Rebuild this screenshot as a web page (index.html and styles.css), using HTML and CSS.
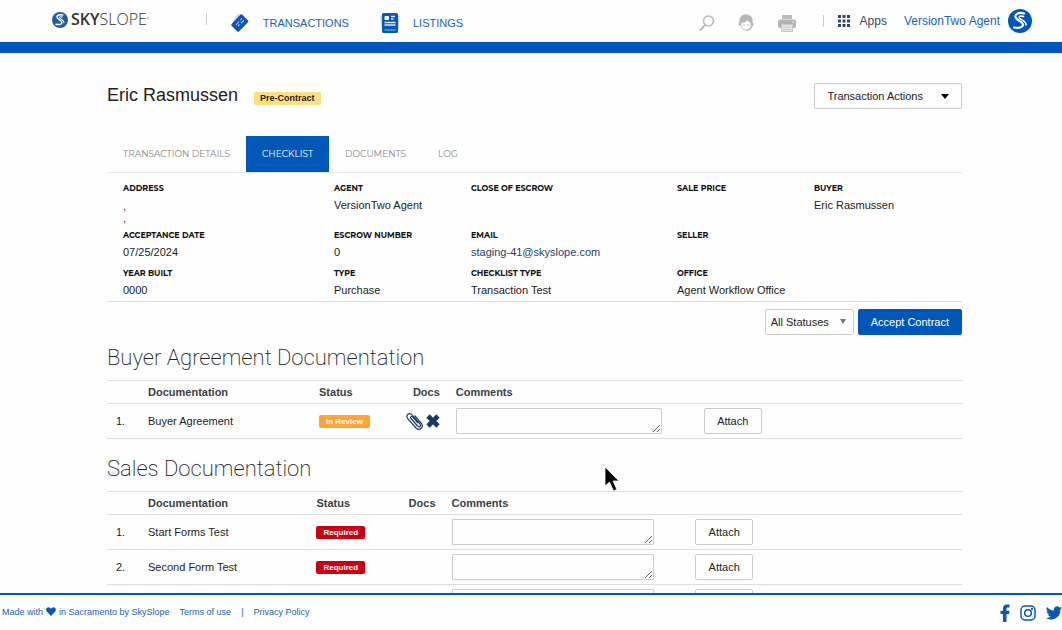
FILE: index.html
```html
<!DOCTYPE html>
<html lang="en">
<head>
    <meta charset="UTF-8">
    <meta name="viewport" content="width=device-width, initial-scale=1.0">
    <title>SkySlope - Checklist</title>
    <link rel="stylesheet" href="styles.css">
</head>
<body>
    <header class="topbar">
        <a href="#" class="logo">
            <svg width="16" height="16" viewBox="0 0 24 24" aria-hidden="true">
                <circle cx="12" cy="12" r="12" fill="#1f5ba8"/>
                <path d="M16 4.500C11 3 7 5 7.500 8C8.500 12 15.500 12.500 15 16C14.500 18.500 11 19.500 6 18.500" fill="none" stroke="#fff" stroke-width="2.200" stroke-linecap="round"/>
                <path d="M15.500 7.500C12.500 6.500 10.500 7.500 11.500 9C13 11 18.500 12 18 16" fill="none" stroke="#fff" stroke-width="1.600" stroke-linecap="round"/>
            </svg>
            <span class="logo-text"><b>SKY</b>SLOPE<small>'</small></span>
        </a>
        <nav class="main-nav">
            <a href="#">
                <svg width="20" height="20" viewBox="0 0 20 20" aria-hidden="true">
                    <path d="M3 8L7 1.500L11 1.500L5 10Z" fill="#d5dbe3"/>
                    <path d="M1.500 11L10.500 1.500Q11.500 1 12.300 1.800L18 7.500Q18.600 8.500 18 9.200L9 18.600Q8 19.200 7.200 18.400L1.500 12.800Q1 12 1.500 11Z" fill="#0a57b5"/>
                    <path d="M6 12L9 8.500M8 13L9.500 11.500M10.500 7L12 5.500M11 10L14 7.500" stroke="#a9c8ec" stroke-width="1.100"/>
                </svg>
                <span>TRANSACTIONS</span>
            </a>
            <a href="#">
                <svg width="20" height="22" viewBox="0 0 20 22" aria-hidden="true">
                    <path d="M0 4L3 3V19L2 18ZM20 4L17 3V19L18.500 18Z" fill="#cdd6e0"/>
                    <rect x="2" y="1" width="16" height="20" rx="1.500" fill="#0a57b5"/>
                    <rect x="4.500" y="4" width="4.500" height="4" rx="1" fill="#fff"/>
                    <path d="M11 4.500H15M11 7H13.500M4.500 10.500H15.500M4.500 13H15.500" stroke="#dbe8f7" stroke-width="1.300"/>
                    <path d="M4.500 18H15.500" stroke="#8fb4e0"/>
                </svg>
                <span>LISTINGS</span>
            </a>
        </nav>
        <div class="tools">
            <button type="button" class="icon-button" aria-label="Search">
                <svg width="16" height="18" viewBox="0 0 16 18">
                    <circle cx="9.500" cy="7" r="5" fill="none" stroke="#b9bbbd" stroke-width="1.600"/>
                    <path d="M6 11L1.500 16" stroke="#b9bbbd" stroke-width="2" stroke-linecap="round"/>
                </svg>
            </button>
            <button type="button" class="icon-button" aria-label="Support">
                <svg width="16" height="18" viewBox="0 0 16 18">
                    <path d="M1.500 9C.5 3 4 .5 8 .5S15.500 3 14.500 9Z" fill="#b5b7b9"/>
                    <circle cx="1.800" cy="10" r="1.500" fill="#b5b7b9"/>
                    <circle cx="14.200" cy="10" r="1.500" fill="#b5b7b9"/>
                    <path d="M3 9Q7 8.500 9.500 6Q11 8 13 9V11Q12.500 16 8 16T3 11Z" fill="#fefefe" stroke="#c3c5c7"/>
                    <circle cx="6" cy="11" r=".8" fill="#aaa"/>
                    <circle cx="10" cy="11" r=".8" fill="#aaa"/>
                    <path d="M8 16.800L12.500 15.500L14.500 11" fill="none" stroke="#b5b7b9"/>
                </svg>
            </button>
            <button type="button" class="icon-button" aria-label="Print">
                <svg width="20" height="18" viewBox="0 0 20 18">
                    <rect x="5" y="1" width="10" height="4" fill="#b9bbbd"/>
                    <rect x="1" y="5.500" width="18" height="8.500" rx="2" fill="#b1b3b5"/>
                    <circle cx="16" cy="8" r=".8" fill="#fff"/>
                    <rect x="4.500" y="10.500" width="11" height="7" fill="#e6e7e8" stroke="#c5c7c9"/>
                    <path d="M6 13H14M6 15.500H14" stroke="#c5c7c9"/>
                </svg>
            </button>
        </div>
        <div class="account">
            <button type="button" class="apps">
                <svg width="14" height="14" viewBox="0 0 14 14" fill="#33475b" aria-hidden="true">
                    <rect x="1" y="1" width="3" height="3"/><rect x="5.500" y="1" width="3" height="3"/><rect x="10" y="1" width="3" height="3"/>
                    <rect x="1" y="5.500" width="3" height="3"/><rect x="5.500" y="5.500" width="3" height="3"/><rect x="10" y="5.500" width="3" height="3"/>
                    <rect x="1" y="10" width="3" height="3"/><rect x="5.500" y="10" width="3" height="3"/><rect x="10" y="10" width="3" height="3"/>
                </svg>
                Apps
            </button>
            <a href="#" class="user">
                VersionTwo Agent
                <svg width="24" height="24" viewBox="0 0 24 24" aria-hidden="true">
                    <circle cx="12" cy="12" r="12" fill="#0057b8"/>
                    <path d="M16 4.500C11 3 7 5 7.500 8C8.500 12 15.500 12.500 15 16C14.500 18.500 11 19.500 6 18.500" fill="none" stroke="#fff" stroke-width="2.200" stroke-linecap="round"/>
                    <path d="M15.500 7.500C12.500 6.500 10.500 7.500 11.500 9C13 11 18.500 12 18 16" fill="none" stroke="#fff" stroke-width="1.600" stroke-linecap="round"/>
                </svg>
            </a>
        </div>
    </header>

    <main class="page">
        <div class="title-row">
            <h1>Eric Rasmussen</h1>
            <span class="label label-pre">Pre-Contract</span>
            <button type="button" class="btn btn-actions">Transaction Actions <span class="caret"></span></button>
        </div>

        <nav class="tabs">
            <a href="#">TRANSACTION DETAILS</a>
            <a href="#" class="active">CHECKLIST</a>
            <a href="#">DOCUMENTS</a>
            <a href="#">LOG</a>
        </nav>

        <dl class="summary">
            <div><dt>ADDRESS</dt><dd class="address">,<br>,</dd></div>
            <div><dt>AGENT</dt><dd>VersionTwo Agent</dd></div>
            <div><dt>CLOSE OF ESCROW</dt><dd></dd></div>
            <div><dt>SALE PRICE</dt><dd></dd></div>
            <div><dt>BUYER</dt><dd>Eric Rasmussen</dd></div>
            <div><dt>ACCEPTANCE DATE</dt><dd>07/25/2024</dd></div>
            <div><dt>ESCROW NUMBER</dt><dd>0</dd></div>
            <div><dt>EMAIL</dt><dd><a href="mailto:staging-41@skyslope.com">staging-41@skyslope.com</a></dd></div>
            <div class="wide"><dt>SELLER</dt><dd></dd></div>
            <div><dt>YEAR BUILT</dt><dd>0000</dd></div>
            <div><dt>TYPE</dt><dd>Purchase</dd></div>
            <div><dt>CHECKLIST TYPE</dt><dd>Transaction Test</dd></div>
            <div class="wide"><dt>OFFICE</dt><dd>Agent Workflow Office</dd></div>
        </dl>

        <div class="toolbar">
            <div class="select-wrap">
                <select aria-label="Status filter">
                    <option>All Statuses</option>
                    <option>Required</option>
                    <option>In Review</option>
                </select>
            </div>
            <button type="button" class="btn btn-primary">Accept Contract</button>
        </div>

        <section>
            <h2>Buyer Agreement Documentation</h2>
            <table class="checklist buyer">
                <colgroup><col class="col-num"><col class="col-doc"><col class="col-status"><col class="col-files"><col class="col-comments"><col></colgroup>
                <thead>
                    <tr><th></th><th>Documentation</th><th>Status</th><th class="files">Docs</th><th>Comments</th><th></th></tr>
                </thead>
                <tbody>
                    <tr>
                        <td class="num">1.</td>
                        <td>Buyer Agreement</td>
                        <td><span class="label label-review">In Review</span></td>
                        <td class="files">
                            <div class="file-icons">
                                <button type="button" class="icon-button" aria-label="View attachment">
                                    <svg width="17" height="19" viewBox="0 0 17 19">
                                        <path d="M5 6.500L11.500 14Q13 15.500 14 14.500T14 12L6 2.800Q4 .8 2 2.300T1.500 6.300L10 16Q12.500 18.500 15 16.500T15.500 11.500L9 4M5 6.500Q4 5.300 5 4.700T7 5.300L11.500 10.500" fill="none" stroke="#173a6a" stroke-width="1.200" stroke-linecap="round"/>
                                    </svg>
                                </button>
                                <button type="button" class="icon-button" aria-label="Remove">
                                    <svg width="14" height="14" viewBox="0 0 14 14">
                                        <path d="M2 2L12 12M12 2L2 12" stroke="#173a6a" stroke-width="4.600"/>
                                    </svg>
                                </button>
                            </div>
                        </td>
                        <td><textarea rows="1" aria-label="Comments for Buyer Agreement"></textarea></td>
                        <td><button type="button" class="btn">Attach</button></td>
                    </tr>
                </tbody>
            </table>
        </section>

        <section>
            <h2>Sales Documentation</h2>
            <table class="checklist sales">
                <colgroup><col class="col-num"><col class="col-doc"><col class="col-status"><col class="col-files"><col class="col-comments"><col></colgroup>
                <thead>
                    <tr><th></th><th>Documentation</th><th>Status</th><th class="files">Docs</th><th>Comments</th><th></th></tr>
                </thead>
                <tbody>
                    <tr>
                        <td class="num">1.</td>
                        <td>Start Forms Test</td>
                        <td><span class="label label-required">Required</span></td>
                        <td></td>
                        <td><textarea rows="1" aria-label="Comments for Start Forms Test"></textarea></td>
                        <td><button type="button" class="btn">Attach</button></td>
                    </tr>
                    <tr>
                        <td class="num">2.</td>
                        <td>Second Form Test</td>
                        <td><span class="label label-required">Required</span></td>
                        <td></td>
                        <td><textarea rows="1" aria-label="Comments for Second Form Test"></textarea></td>
                        <td><button type="button" class="btn">Attach</button></td>
                    </tr>
                    <tr>
                        <td></td>
                        <td></td>
                        <td></td>
                        <td></td>
                        <td><textarea rows="1" aria-label="Comments"></textarea></td>
                        <td><button type="button" class="btn" aria-label="Attach"></button></td>
                    </tr>
                </tbody>
            </table>
        </section>
    </main>

    <footer class="footer">
        <p>
            Made with
            <svg width="10" height="9" viewBox="0 0 10 9" aria-hidden="true"><path d="M5 9L.8 4.600C-.6 2.500.5.300 2.500.200Q4.200.200 5 1.700Q5.800.200 7.500.200C9.500.300 10.600 2.500 9.200 4.600Z" fill="#0a57b5"/></svg>
            in Sacramento by SkySlope
        </p>
        <a href="#">Terms of use</a>
        <span>|</span>
        <a href="#">Privacy Policy</a>
        <div class="social">
            <a href="#" aria-label="Facebook">
                <svg width="10" height="18" viewBox="0 0 10 18"><path d="M3 18V10H.5V6.800H3V4.500C3 1.800 4.500.5 7 .5H9.500V3.500H8C6.800 3.500 6.500 4 6.500 5V6.800H9.500L9 10H6.500V18Z" fill="#0a57b5"/></svg>
            </a>
            <a href="#" aria-label="Instagram">
                <svg width="16" height="16" viewBox="0 0 16 16" fill="none" stroke="#0a57b5" stroke-width="1.500"><rect x="1" y="1" width="14" height="14" rx="4"/><circle cx="8" cy="8" r="3.300"/><circle cx="12" cy="4" r=".4"/></svg>
            </a>
            <a href="#" aria-label="Twitter">
                <svg width="16" height="14" viewBox="0 0 24 20"><path d="M24 2.400a10 10 0 0 1-2.800.8A5 5 0 0 0 23.300.5a10 10 0 0 1-3.100 1.200A4.900 4.900 0 0 0 11.800 6.200 14 14 0 0 1 1.700 1a4.900 4.900 0 0 0 1.500 6.600A5 5 0 0 1 1 7a4.900 4.900 0 0 0 3.900 4.900 5 5 0 0 1-2.200.1 4.900 4.900 0 0 0 4.600 3.400A10 10 0 0 1 0 17.500 14 14 0 0 0 21.500 5 10 10 0 0 0 24 2.400Z" fill="#0a57b5"/></svg>
            </a>
        </div>
    </footer>

    <svg class="pointer" width="17" height="27" viewBox="0 0 17 27" aria-hidden="true">
        <path d="M1 1V20L5.500 16L9.500 25L13 23.500L9 15H15Z" fill="#000" stroke="#fff" stroke-width=".8"/>
    </svg>
</body>
</html>
```

FILE: styles.css
```css
* {
    box-sizing: border-box;
}

html {
    scrollbar-width: none;
}

body {
    margin: 0;
    padding: 53px 0 37px;
    background-color: #fefefe;
    color: #222;
    font-family: "Liberation Sans", Arial, sans-serif;
    font-size: 11px;
    line-height: 20px;
}

a {
    color: #1762bd;
    text-decoration: none;
}

svg {
    display: block;
}

h1, h2, p, dl, dd {
    margin: 0;
}

button, select, textarea {
    font-family: inherit;
    font-size: 11px;
    color: #222;
}

.icon-button {
    background: none;
    border: none;
    padding: 0;
    cursor: pointer;
}

/* top bar */
.topbar {
    position: fixed;
    top: 0;
    left: 0;
    right: 0;
    z-index: 10;
    height: 53px;
    display: flex;
    align-items: center;
    padding: 0 30px 0 52px;
    background-color: #fefefe;
    border-bottom: 11px solid #0057b8;
}

.logo {
    display: flex;
    align-items: center;
    gap: 3px;
    padding-bottom: 2px;
    color: #333;
}

.logo-text {
    font-family: "Open Sans", "Noto Sans", sans-serif;
    font-size: 16px;
    font-weight: 300;
}

.logo-text b {
    font-weight: 600;
}

.logo-text small {
    font-size: 10px;
}

.main-nav {
    display: flex;
    gap: 31px;
    margin-left: 57px;
    padding-left: 24px;
    background: linear-gradient(#ccc, #ccc) 0 4px / 1px 12px no-repeat;
}

.main-nav a {
    display: flex;
    align-items: center;
    gap: 13px;
    padding-top: 3px;
}

.tools {
    display: flex;
    align-items: center;
    gap: 23px;
    margin-left: auto;
    padding-top: 4px;
}

.account {
    display: flex;
    align-items: center;
    gap: 17px;
    margin-left: 26px;
    padding-left: 14px;
    background: linear-gradient(#ccc, #ccc) 0 6px / 1px 12px no-repeat;
}

.apps, .user {
    display: flex;
    align-items: center;
    font-size: 12px;
}

.apps {
    gap: 9px;
    padding: 0;
    background: none;
    border: none;
    color: #33475b;
}

.user {
    gap: 8px;
}

/* page */
.page {
    padding: 30px 100px 0 107px;
}

.title-row {
    display: flex;
    align-items: center;
}

h1 {
    font-size: 18px;
    font-weight: normal;
    line-height: 24px;
    margin-right: 16px;
    padding-bottom: 2px;
}

.label {
    display: block;
    width: fit-content;
    padding: 0 7px;
    border-radius: 2px;
    color: #fff;
    font-size: 8px;
    font-weight: bold;
    line-height: 13px;
}

.label-pre {
    margin-top: 4px;
    background-color: #fddf80;
    color: #222;
    font-size: 9px;
    padding: 0 6px;
}

.label-review {
    background-color: #ffa436;
}

.label-required {
    background-color: #c90016;
}

.btn {
    display: block;
    height: 26px;
    min-width: 58px;
    padding: 0 12px;
    background-color: #fefefe;
    border: 1px solid #ccc;
    border-radius: 2px;
    cursor: pointer;
}

.btn-actions {
    display: flex;
    align-items: center;
    gap: 18px;
    margin-left: auto;
}

.caret {
    border: 4px solid transparent;
    border-top: 5px solid #000;
    border-bottom: none;
}

.btn-primary {
    background-color: #0057b8;
    border-color: #0057b8;
    color: #fff;
}

/* tabs */
.tabs {
    display: flex;
    margin-top: 27px;
    border-bottom: 1px solid #e4e4e4;
}

.tabs a {
    padding: 0 16px;
    color: #888;
    font-family: Montserrat, Inter, sans-serif;
    font-size: 9px;
    line-height: 36px;
}

.tabs .active {
    background-color: #0057b8;
    color: #fff;
}

/* transaction summary */
.summary {
    display: grid;
    grid-template-columns: 211fr 137fr 206fr 137fr 148fr;
    row-gap: 4px;
    padding: 8px 0 1px 16px;
    border-bottom: 1px solid #ddd;
}

.summary .wide {
    grid-column: span 2;
}

.summary dt {
    color: #111;
    font-family: Montserrat, Inter, sans-serif;
    font-size: 8px;
    font-weight: bold;
    line-height: 14px;
}

.summary a {
    color: #1d3f72;
}

.summary .address {
    padding-top: 5px;
    line-height: 12px;
}

.toolbar {
    display: flex;
    justify-content: flex-end;
    gap: 4px;
    padding: 7px 0 8px;
}

.select-wrap {
    position: relative;
}

.select-wrap::after {
    content: "";
    position: absolute;
    top: 10px;
    right: 8px;
    border: 3px solid transparent;
    border-top: 5px solid #777;
    border-bottom: none;
    pointer-events: none;
}

select {
    appearance: none;
    height: 26px;
    width: 89px;
    padding: 0 5px;
    background-color: #fefefe;
    border: 1px solid #ccc;
    border-radius: 2px;
}

/* checklists */
h2 {
    font-family: Roboto, sans-serif;
    font-size: 22px;
    font-weight: 200;
    line-height: 30px;
    margin-bottom: 7px;
}

.checklist {
    width: 100%;
    margin-bottom: 15px;
    table-layout: fixed;
    border-collapse: collapse;
    border-top: 1px solid #ddd;
}

.checklist tr {
    border-bottom: 1px solid #ddd;
}

.checklist th {
    height: 23px;
    padding: 0;
    color: #3a3f45;
    line-height: 16px;
    text-align: left;
}

.checklist td {
    height: 35px;
    padding: 0;
}

.checklist .num {
    padding-left: 9px;
}

.checklist .files {
    padding-right: 16px;
    text-align: right;
}

.file-icons {
    display: flex;
    align-items: center;
    justify-content: flex-end;
    gap: 3px;
}

.col-num { width: 4.800%; }
.col-doc { width: 20%; }
.col-status { width: 9%; }
.col-files { width: 7%; }
.col-comments { width: 29%; }

.sales .col-doc { width: 19.700%; }
.sales .col-files { width: 6.800%; }
.sales .col-comments { width: 28.500%; }

textarea {
    display: block;
    width: 83%;
    height: 26px;
    padding: 4px;
    background-color: #fefefe;
    border: 1px solid #ccc;
    border-radius: 1px;
    resize: vertical;
}

/* footer */
.footer {
    position: fixed;
    left: 0;
    right: 0;
    bottom: 0;
    z-index: 10;
    height: 37px;
    display: flex;
    align-items: center;
    gap: 10px;
    padding: 0 0 2px 2px;
    background-color: #fefefe;
    border-top: 2px solid #0057b8;
    color: #1762bd;
    font-size: 9px;
}

.footer p {
    display: flex;
    align-items: center;
    gap: 3px;
}

.social {
    display: flex;
    align-items: center;
    gap: 10px;
    margin-left: auto;
    padding-top: 3px;
}

.pointer {
    position: absolute;
    top: 466px;
    left: 604px;
    z-index: 20;
}
```
